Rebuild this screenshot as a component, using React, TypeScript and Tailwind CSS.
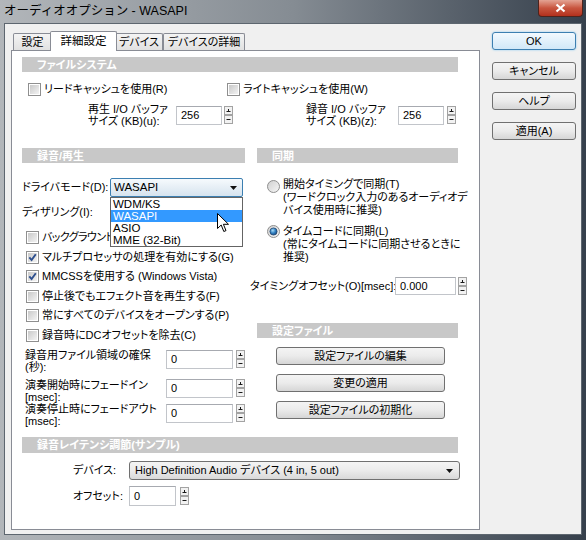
import React from "react";

const FONT =
  "font-['Liberation_Sans','Noto_Sans_CJK_JP',sans-serif] [font-feature-settings:'palt']";

function Check({ checked = false }: { checked?: boolean }) {
  return (
    <span className="flex h-[13px] w-[13px] shrink-0 border border-[#8f8f8f] bg-white p-[1px]">
      <span className="flex h-full w-full items-center justify-center bg-linear-to-br from-[#c9c9c9] to-[#f3f3f3]">
        {checked && (
          <svg width="9" height="9" viewBox="0 0 9 9">
            <path d="M1.3 4.3 L3.6 7 L7.8 1.2" fill="none" stroke="#2d4f8e" strokeWidth="1.9" />
          </svg>
        )}
      </span>
    </span>
  );
}

function Radio({ on = false }: { on?: boolean }) {
  return (
    <svg width="13" height="13" viewBox="0 0 13 13" className="shrink-0">
      <defs>
        <linearGradient id="rg" x1="0" y1="0" x2="1" y2="1">
          <stop offset="0" stopColor="#cfcfcf" />
          <stop offset="1" stopColor="#f7f7f7" />
        </linearGradient>
        <radialGradient id="rd" cx="0.4" cy="0.35" r="0.7">
          <stop offset="0" stopColor="#a8dcf8" />
          <stop offset="0.55" stopColor="#2f7ec0" />
          <stop offset="1" stopColor="#1b4a80" />
        </radialGradient>
      </defs>
      <circle cx="6.5" cy="6.5" r="6" fill="url(#rg)" stroke="#8f8f8f" />
      {on && <circle cx="6.5" cy="6.5" r="3.6" fill="url(#rd)" stroke="#1d3d66" strokeWidth="0.7" />}
    </svg>
  );
}

function Spin({ className = "" }: { className?: string }) {
  return (
    <svg width="9" height="18" viewBox="0 0 9 18" className={`shrink-0 ${className}`}>
      <rect x="0.5" y="0.5" width="8" height="8" fill="#f2f2f2" stroke="#a3a3a3" />
      <rect x="0.5" y="9.5" width="8" height="8" fill="#f2f2f2" stroke="#a3a3a3" />
      <path d="M2.5 5.5h4M4.5 3v2.5" stroke="#1a1a1a" />
      <path d="M2.5 13.5h4" stroke="#1a1a1a" />
    </svg>
  );
}

function TextBox({ children, className = "" }: { children: React.ReactNode; className?: string }) {
  return (
    <div
      className={`flex shrink-0 items-center border border-[#c2c5ca] border-t-[#a7aab0] bg-white pl-[4px] ${className}`}
    >
      {children}
    </div>
  );
}

function Btn({ children, className = "" }: { children: React.ReactNode; className?: string }) {
  return (
    <div
      className={`flex shrink-0 items-center justify-center rounded-[3px] border border-[#707070] bg-linear-to-b from-[#f4f4f4] via-[#ebebeb] to-[#d6d6d6] leading-[14px] ${className}`}
    >
      {children}
    </div>
  );
}

function Bar({ children, className = "" }: { children: React.ReactNode; className?: string }) {
  return (
    <div
      className={`flex h-[15px] shrink-0 items-center bg-[#c8c8c8] pl-[15px] font-bold leading-[14px] text-white ${className}`}
    >
      {children}
    </div>
  );
}

function Arrow() {
  return (
    <svg width="7" height="4" viewBox="0 0 7 4">
      <path d="M0 0h7L3.5 4z" fill="#111" />
    </svg>
  );
}

function CheckRow({
  label,
  checked = false,
  extra = "",
}: {
  label: string;
  checked?: boolean;
  extra?: string;
}) {
  return (
    <div className="flex h-[19.5px] items-center whitespace-nowrap pl-[4px]">
      <Check checked={checked} />
      <span className={`ml-[3px] ${extra}`}>{label}</span>
    </div>
  );
}

function Tab({ children, className = "" }: { children: React.ReactNode; className?: string }) {
  return (
    <div
      className={`flex h-[17px] shrink-0 items-center justify-center rounded-t-[2px] border border-b-0 border-[#898c95] bg-linear-to-b from-[#f4f4f4] to-[#e1e1e1] ${className}`}
    >
      {children}
    </div>
  );
}

export default function App() {
  return (
    <div
      className={`${FONT} relative flex h-[540px] w-[586px] flex-col overflow-hidden bg-linear-to-r from-[#b2b6ba] via-[#858c93] to-[#36404c] text-[11px] leading-[13px] text-black`}
    >
      {/* title bar */}
      <div className="flex h-[23px] shrink-0 items-start justify-between">
        <span className="pl-[4px] pt-[3px] text-[12.5px] leading-[16px] [font-feature-settings:normal]">
          オーディオオプション - WASAPI
        </span>
        <div className="mr-[3px] flex h-[17px] w-[45px] items-center justify-center rounded-b-[4px] border border-t-0 border-[#4f231c] bg-linear-to-b from-[#e3a394] via-[#c8553f] to-[#b3301c]">
          <svg width="11" height="10" viewBox="0 0 11 10">
            <path d="M1.5 1.5l8 7M9.5 1.5l-8 7" stroke="white" strokeWidth="2.2" />
          </svg>
        </div>
      </div>

      {/* client */}
      <div className="mx-[4px] flex h-[512px] shrink-0 border border-[#5d666f] bg-[#f0f0f0] pl-[6px] pt-[7px]">
        <div className="flex w-[469px] shrink-0 flex-col">
          <div className="flex h-[19px] items-end pl-[2px]">
            <Tab className="w-[39px]">設定</Tab>
            <div className="relative z-10 -mx-[2px] -mb-px flex h-[20px] w-[67px] shrink-0 items-center justify-center rounded-t-[2px] border border-b-0 border-[#898c95] bg-white text-[11.5px]">
              詳細設定
            </div>
            <Tab className="w-[48px]">デバイス</Tab>
            <Tab className="w-[82px]">デバイスの詳細</Tab>
          </div>

          <div className="h-[480px] border border-[#898c95] bg-white pl-[10px] pt-[6px]">
            <Bar className="w-[436px]">ファイルシステム</Bar>
            <div className="mt-[11px] flex h-[13px] items-center whitespace-nowrap">
              <div className="flex w-[205px] items-center pl-[6px]">
                <Check />
                <span className="ml-[3px]">リードキャッシュを使用(R)</span>
              </div>
              <div className="flex items-center">
                <Check />
                <span className="ml-[3px]">ライトキャッシュを使用(W)</span>
              </div>
            </div>

            <div className="mt-[6px] flex h-[26px] items-center whitespace-nowrap">
              <div className="ml-[66px] w-[88px] leading-[12px]">
                再生 I/O バッファ
                <br />
                サイズ (KB)(u):
              </div>
              <TextBox className="h-[19px] w-[46px]">256</TextBox>
              <Spin className="ml-[2px]" />
              <div className="ml-[73px] w-[92px] leading-[12px]">
                録音 I/O バッファ
                <br />
                サイズ (KB)(z):
              </div>
              <TextBox className="h-[19px] w-[46px]">256</TextBox>
              <Spin className="ml-[3px]" />
            </div>

            <div className="mt-[20px] flex gap-[12px]">
              {/* left column */}
              <div className="flex w-[223px] shrink-0 flex-col whitespace-nowrap">
                <Bar>録音/再生</Bar>
                <div className="mt-[15px] flex h-[19px] items-center">
                  <span className="w-[88px]">ドライバモード(D):</span>
                  <div className="relative h-[19px] w-[133px]">
                    <div className="flex h-full items-center justify-between rounded-[2px] border border-[#3c7fb1] bg-linear-to-b from-[#f6fafd] to-[#d6e3ee] pl-[3px] pr-[5px] text-[11.5px]">
                      <span>WASAPI</span>
                      <Arrow />
                    </div>
                    <div className="absolute left-0 top-[19px] z-20 w-[133px] border border-[#646464] bg-white text-[11.5px] leading-[12px]">
                      <div className="h-[12px] pl-[2px]">WDM/KS</div>
                      <div className="h-[12px] bg-[#3399ff] pl-[2px] text-white">WASAPI</div>
                      <div className="h-[12px] pl-[2px]">ASIO</div>
                      <div className="h-[12px] pl-[2px]">MME (32-Bit)</div>
                    </div>
                    <svg
                      width="13"
                      height="20"
                      viewBox="0 0 13 20"
                      className="absolute left-[107px] top-[35px] z-30"
                    >
                      <path
                        d="M0.5 0.5 L0.5 15.5 L4.2 12 L6.8 18.5 L9 17.6 L6.4 11.3 L11.5 11.3 Z"
                        fill="white"
                        stroke="black"
                        strokeLinejoin="round"
                      />
                    </svg>
                  </div>
                </div>
                <div className="mt-[6px] flex h-[18px] items-center">ディザリング(I):</div>
                <div className="mt-[7px] flex flex-col">
                  <CheckRow label="バックグラウンド" extra="tracking-[-0.6px]" />
                  <CheckRow label="マルチプロセッサの処理を有効にする(G)" checked />
                  <CheckRow label="MMCSSを使用する (Windows Vista)" checked />
                  <CheckRow label="停止後でもエフェクト音を再生する(F)" />
                  <CheckRow label="常にすべてのデバイスをオープンする(P)" />
                  <CheckRow label="録音時にDCオフセットを除去(C)" />
                </div>
                <div className="mt-[4px] flex items-start pl-[3px]">
                  <div className="w-[152px] leading-[12px]">
                    録音用ファイル領域の確保
                    <br />
                    (秒):
                  </div>
                  <TextBox className="mt-[1px] h-[19px] w-[67px]">0</TextBox>
                  <Spin className="ml-[3px] mt-[1px]" />
                </div>
                <div className="mt-[6px] flex items-start pl-[3px]">
                  <div className="w-[152px] leading-[12px]">
                    演奏開始時にフェードイン
                    <br />
                    [msec]:
                  </div>
                  <TextBox className="h-[19px] w-[67px]">0</TextBox>
                  <Spin className="ml-[3px]" />
                </div>
                <div className="flex items-start pl-[3px]">
                  <div className="w-[152px] leading-[12px]">
                    演奏停止時にフェードアウト
                    <br />
                    [msec]:
                  </div>
                  <TextBox className="mt-[1px] h-[19px] w-[67px]">0</TextBox>
                  <Spin className="ml-[3px] mt-[1px]" />
                </div>
              </div>

              {/* right column */}
              <div className="flex w-[201px] shrink-0 flex-col whitespace-nowrap">
                <Bar>同期</Bar>
                <div className="mt-[15px] flex items-start pl-[10px]">
                  <span className="mt-[2px]">
                    <Radio />
                  </span>
                  <div className="ml-[3px] leading-[13px]">
                    開始タイミングで同期(T)
                    <br />
                    (ワードクロック入力のあるオーディオデ
                    <br />
                    バイス使用時に推奨)
                  </div>
                </div>
                <div className="mt-[8px] flex items-start pl-[10px]">
                  <Radio on />
                  <div className="ml-[3px] leading-[13px]">
                    タイムコードに同期(L)
                    <br />
                    (常にタイムコードに同期させるときに
                    <br />
                    推奨)
                  </div>
                </div>
                <div className="-ml-[7px] mt-[13px] flex h-[18px] items-center">
                  <span className="w-[145px]">タイミングオフセット(O)[msec]:</span>
                  <TextBox className="h-[18px] w-[61px]">0.000</TextBox>
                  <Spin className="ml-[2px]" />
                </div>
                <Bar className="mt-[28px]">設定ファイル</Bar>
                <div className="ml-[19px] mt-[9px] flex flex-col gap-[9px]">
                  <Btn className="h-[18px] w-[169px]">設定ファイルの編集</Btn>
                  <Btn className="h-[18px] w-[169px]">変更の適用</Btn>
                  <Btn className="h-[18px] w-[169px]">設定ファイルの初期化</Btn>
                </div>
              </div>
            </div>

            <Bar className="mt-[10px] h-[16px] w-[436px]">録音レイテンシ調節(サンプル)</Bar>
            <div className="mt-[8px] flex h-[19px] items-center pl-[51px] whitespace-nowrap">
              <span className="w-[56px]">デバイス:</span>
              <div className="flex h-[19px] w-[331px] items-center justify-between rounded-[3px] border border-[#707070] bg-linear-to-b from-[#f4f4f4] via-[#ebebeb] to-[#d9d9d9] pl-[5px] pr-[6px]">
                <span>High Definition Audio デバイス (4 in, 5 out)</span>
                <Arrow />
              </div>
            </div>
            <div className="mt-[6px] flex h-[20px] items-center pl-[51px]">
              <span className="w-[56px]">オフセット:</span>
              <TextBox className="h-[20px] w-[47px]">0</TextBox>
              <Spin className="ml-[4px]" />
            </div>
          </div>
        </div>

        {/* dialog buttons */}
        <div className="ml-[12px] mt-[1px] flex flex-col gap-[12px]">
          <div className="flex h-[18px] w-[84px] items-center justify-center rounded-[3px] border border-[#3c7fb1] bg-linear-to-b from-[#f2f9fe] to-[#d1e8f8] leading-[14px] shadow-[0_0_2px_#7fc6f2]">
            OK
          </div>
          <Btn className="h-[18px] w-[84px]">キャンセル</Btn>
          <Btn className="h-[18px] w-[84px]">ヘルプ</Btn>
          <Btn className="h-[18px] w-[84px]">適用(A)</Btn>
        </div>
      </div>
    </div>
  );
}
